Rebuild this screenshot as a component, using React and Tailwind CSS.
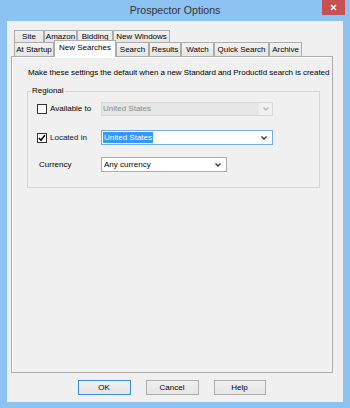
import React from 'react'

const TOP_TABS = [
  { label: 'Site', w: 'w-[30px]' },
  { label: 'Amazon', w: 'w-[33px]' },
  { label: 'Bidding', w: 'w-[36px]' },
  { label: 'New Windows', w: 'w-[57px]' },
]

const FRONT_TABS = [
  { label: 'At Startup', w: 'w-[40px]' },
  { label: 'New Searches', w: 'w-[62px]', selected: true },
  { label: 'Search', w: 'w-[33px]' },
  { label: 'Results', w: 'w-[32px]' },
  { label: 'Watch', w: 'w-[33px]' },
  { label: 'Quick Search', w: 'w-[55px]' },
  { label: 'Archive', w: 'w-[33px]' },
]

function Tab({ label, w, selected }) {
  if (selected) {
    return (
      <div className={`relative z-10 -mt-[2px] h-[17px] ${w} bg-white border border-b-0 border-[#acacac] flex items-start justify-center pt-[2px] leading-[10px]`}>
        {label}
      </div>
    )
  }
  return (
    <div className={`h-full ${w} bg-linear-to-b from-[#f2f2f2] to-[#e5e5e5] border border-b-0 border-[#acacac] flex items-center justify-center leading-[10px]`}>
      {label}
    </div>
  )
}

function Chevron({ color }) {
  return (
    <svg width="6" height="4" viewBox="0 0 6 4" className="shrink-0">
      <path d="M0.5 0.5 L3 3 L5.5 0.5" fill="none" stroke={color} strokeWidth="1.3" />
    </svg>
  )
}

function Checkbox({ checked }) {
  return (
    <div className="w-[10px] h-[10px] border border-[#333] bg-white flex items-center justify-center shrink-0">
      {checked && (
        <svg width="8" height="8" viewBox="0 0 8 8">
          <path d="M1 4 L3 6.3 L7 1" fill="none" stroke="#000" strokeWidth="1.5" />
        </svg>
      )}
    </div>
  )
}

export default function App() {
  return (
    <div className="w-[350px] h-[408px] bg-[#8cc3f2] flex flex-col text-black text-[8px] [font-family:'Liberation_Sans',Arial,sans-serif]">
      <div className="relative h-[21px] flex items-center justify-center shrink-0">
        <span className="text-[10.6px] text-[#333] leading-none -mt-[1px]">Prospector Options</span>
        <div className="absolute right-[5px] top-0 w-[23px] h-[15px] bg-[#c75050] flex items-center justify-center">
          <svg width="7" height="7" viewBox="0 0 7 7">
            <path d="M1 1 L6 6 M6 1 L1 6" stroke="#fff" strokeWidth="1.6" />
          </svg>
        </div>
      </div>

      <div className="flex-1 mx-[7px] mb-[6px] bg-[#f0f0f0] flex flex-col pt-[9px]">
        <div className="flex h-[12px] ml-[7px]">
          {TOP_TABS.map(t => <Tab key={t.label} {...t} />)}
        </div>
        <div className="flex h-[14px] ml-[7px]">
          {FRONT_TABS.map(t => <Tab key={t.label} {...t} />)}
        </div>

        <div className="ml-[4px] w-[322px] h-[317px] border border-[#acacac] shadow-[inset_1px_1px_0_#ffffff] bg-[#f0f0f0] pt-[11px]">
          <p className="pl-[16px] leading-[10px] whitespace-nowrap tracking-[-0.05px]">Make these settings the default when a new Standard and ProductId search is created</p>

          <fieldset className="ml-[15px] mt-[8px] w-[293px] border border-[#d5d5d5] pl-[9px] pb-[15px]">
            <legend className="-ml-[6px] px-[1px] leading-[10px]">Regional</legend>

            <div className="flex items-center h-[15px] mt-[5px]">
              <div className="w-[64px] flex items-center gap-[3px]">
                <Checkbox />
                <span className="leading-[10px]">Available to</span>
              </div>
              <div className="w-[172px] h-[14px] border border-[#d9d9d9] flex">
                <div className="flex-1 bg-[#e6e6e6] text-[#8a8a8a] leading-[12px] pl-[1px]">United States</div>
                <div className="w-[13px] bg-[#f0f0f0] flex items-center justify-center">
                  <Chevron color="#b5b5b5" />
                </div>
              </div>
            </div>

            <div className="flex items-center h-[15px] mt-[14px]">
              <div className="w-[64px] flex items-center gap-[3px]">
                <Checkbox checked />
                <span className="leading-[10px] text-[#1a1020]">Located in</span>
              </div>
              <div className="w-[172px] h-[15px] border border-[#73ade6] bg-white flex items-center pl-[1px] pr-[5px]">
                <span className="bg-[#3399ff] text-white leading-[11px] px-[1px]">United States</span>
                <div className="flex-1" />
                <Chevron color="#333" />
              </div>
            </div>

            <div className="flex items-center h-[15px] mt-[12px]">
              <div className="w-[64px] pl-[2px] leading-[10px]">Currency</div>
              <div className="w-[126px] h-[15px] border border-[#acacac] bg-white flex items-center pl-[2px] pr-[5px]">
                <span className="leading-[11px]">Any currency</span>
                <div className="flex-1" />
                <Chevron color="#333" />
              </div>
            </div>
          </fieldset>
        </div>

        <div className="flex justify-center gap-[15px] mt-[7px] -ml-[7px]">
          <button className="w-[53px] h-[15px] border border-[#3c8fd6] bg-linear-to-b from-[#f0f0f0] to-[#e5e5e5] leading-[10px]">OK</button>
          <button className="w-[53px] h-[15px] border border-[#acacac] bg-linear-to-b from-[#f0f0f0] to-[#e5e5e5] leading-[10px]">Cancel</button>
          <button className="w-[52px] h-[15px] border border-[#acacac] bg-linear-to-b from-[#f0f0f0] to-[#e5e5e5] leading-[10px]">Help</button>
        </div>
      </div>
    </div>
  )
}
